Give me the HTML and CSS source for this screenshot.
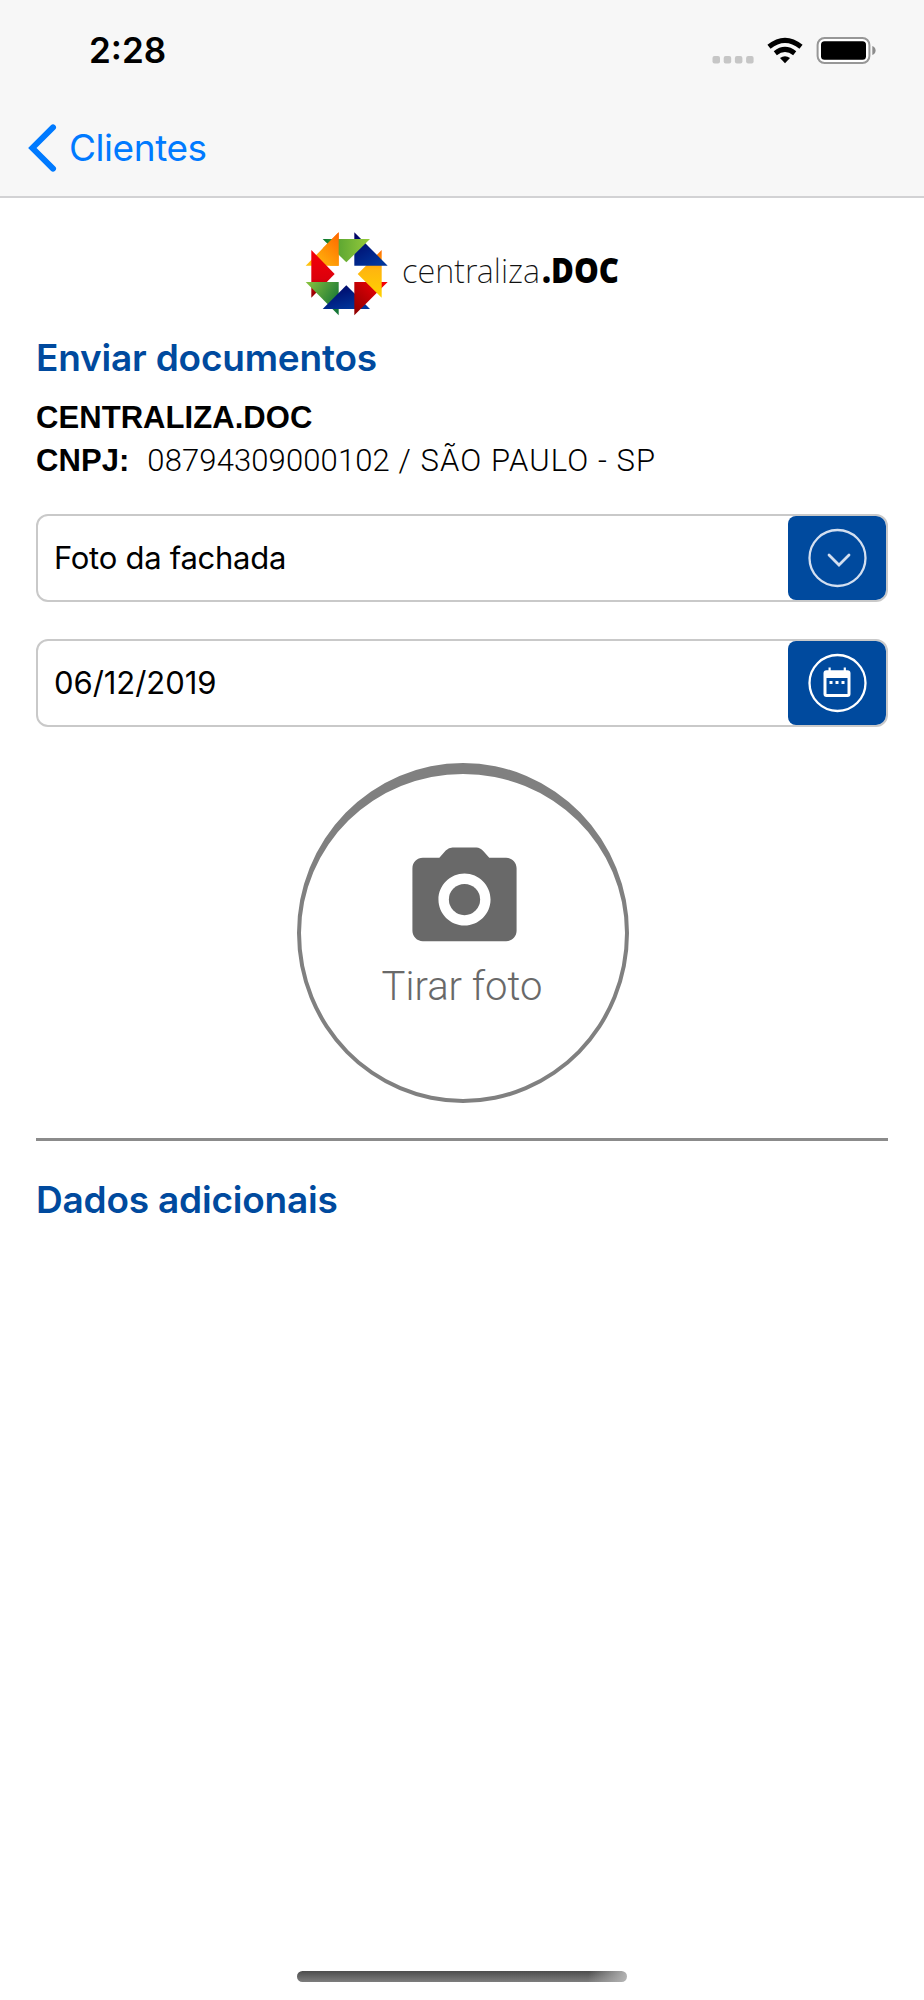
FILE: index.html
```html
<!DOCTYPE html>
<html lang="pt-BR">
<head>
<meta charset="utf-8">
<title>Enviar documentos</title>
<link rel="stylesheet" href="styles.css">
</head>
<body>
<div class="screen">
  <header class="header">
    <div class="status">
      <span class="time">2:28</span>
      <svg class="status-icons" width="166" height="30" viewBox="0 0 166 30">
        <g fill="#c6c6c6"><rect x="0.5" y="16" width="7.5" height="7.5" rx="2"/><rect x="11.7" y="16" width="7.5" height="7.5" rx="2"/><rect x="22.9" y="16" width="7.5" height="7.5" rx="2"/><rect x="34.1" y="16" width="7.5" height="7.5" rx="2"/></g>
        <g fill="none" stroke="#000" stroke-width="5"><path d="M57 6.8Q73 -6.2 89 6.8"/><path d="M63.3 13.2Q73 5.6 82.7 13.2"/></g>
        <path d="M68 18.1Q73 14.2 78 18.1L73 23.3Z"/>
        <rect x="105.6" y="-2.1" width="51.8" height="25.2" rx="7" fill="#fff" stroke="#979797" stroke-width="2"/>
        <rect x="109" y="1.2" width="45" height="18.6" rx="3.5"/>
        <path d="M160.3 6Q163.6 7.2 163.6 10.5Q163.6 13.8 160.3 15Z" fill="#8c8c8c"/>
      </svg>
    </div>
    <a class="back">
      <svg width="28" height="48" viewBox="0 0 28 48"><path d="M25 3.400L4.400 24L25 44.600" fill="none" stroke="#007aff" stroke-width="6" stroke-linecap="round"/></svg>
      <span class="back-label">Clientes</span>
    </a>
  </header>

  <main class="content">
    <svg class="logo" width="316" height="86" viewBox="0 0 316 86">
      <defs>
        <linearGradient id="green" x1="0" y1="0" x2="1" y2="0"><stop offset="0" stop-color="#00732f"/><stop offset=".35" stop-color="#5fa832"/><stop offset="1" stop-color="#97cb3c"/></linearGradient>
        <linearGradient id="green2" x1="0" y1="0" x2="1" y2=".6"><stop offset="0" stop-color="#8bc53f"/><stop offset="1" stop-color="#157536"/></linearGradient>
        <linearGradient id="orange" gradientUnits="userSpaceOnUse" x1="60" y1="137" x2="146" y2="50"><stop offset="0" stop-color="#ffc20e"/><stop offset="1" stop-color="#ff6c00"/></linearGradient>
        <linearGradient id="amber" x1="0" y1="1" x2="0" y2="0"><stop offset="0" stop-color="#ffd200"/><stop offset=".6" stop-color="#ffb50f"/><stop offset="1" stop-color="#ff6c00"/></linearGradient>
        <linearGradient id="navy" x1="0" y1="0" x2=".6" y2="1"><stop offset="0" stop-color="#000060"/><stop offset="1" stop-color="#00359b"/></linearGradient>
        <linearGradient id="red" x1="0" y1="1" x2="0" y2="0"><stop offset="0" stop-color="#8e0000"/><stop offset=".4" stop-color="#dc000c"/><stop offset="1" stop-color="#f60008"/></linearGradient>
        <linearGradient id="red2" x1="0" y1="1" x2="1" y2="0"><stop offset=".1" stop-color="#940000"/><stop offset=".9" stop-color="#f40008"/></linearGradient>
      </defs>
      <g transform="scale(.33333) translate(-45 -33)">
        <path fill="url(#orange)" d="M146 37V137H47Z"/>
        <path fill="url(#red)" d="M64 90V233L134 162Z"/>
        <path fill="url(#green2)" d="M47 186H146V286Z"/>
        <path fill="url(#navy)" d="M98 267H240L169 196Z"/>
        <path fill="url(#red2)" d="M193 186H293L193 286Z"/>
        <path fill="url(#amber)" d="M275 90V233L203 162Z"/>
        <path fill="url(#navy)" d="M193 37V137H293Z"/>
        <path fill="url(#green)" d="M98 57H240L169 127Z"/>
        <path fill="url(#orange)" d="M146 37V137H120L98 85Z"/>
      </g>
      <text class="logo-thin" x="97" y="52" textLength="138" lengthAdjust="spacingAndGlyphs">centraliza</text>
      <text class="logo-bold" x="237" y="52" textLength="77" lengthAdjust="spacingAndGlyphs">.DOC</text>
    </svg>

    <h1 class="title">Enviar documentos</h1>
    <div class="company">CENTRALIZA.DOC</div>
    <div class="cnpj"><b class="cnpj-key">CNPJ:</b><span class="cnpj-value">08794309000102<span class="city"> / SÃO PAULO - SP</span></span></div>

    <div class="field">
      <span class="field-text">Foto da fachada</span>
      <span class="field-button">
        <svg width="60" height="60" viewBox="0 0 60 60" fill="none" stroke="#d3dff0"><circle cx="30.500" cy="30" r="28" stroke-width="2.300"/><path d="M22 27L32 37L42 27" stroke-width="2.8" stroke-linecap="round"/></svg>
      </span>
    </div>
    <div class="field">
      <span class="field-text date">06/12/2019</span>
      <span class="field-button">
        <svg width="60" height="60" viewBox="0 0 60 60"><circle cx="30.500" cy="30" r="28" fill="none" stroke="#fff" stroke-width="2.300"/><path fill="#fff" fill-rule="evenodd" d="M21.5 14.5h2.2V17.300h13V14.500h2.200V17.300H40.500Q43.500 17.300 43.500 20.300V41Q43.500 44 40.500 44H19.500Q16.500 44 16.500 41V20.300Q16.500 17.300 19.500 17.300H21.500ZM19.500 25V41H40.500V25ZM22.500 28h3v3h-3ZM28.500 28h3v3h-3ZM34.500 28h3v3h-3Z"/></svg>
      </span>
    </div>

    <div class="photo">
      <svg width="125" height="125" viewBox="0 0 24 24" fill="#696969"><circle cx="12" cy="12" r="3"/><path d="M9 2L7.170 4H4c-1.100 0-2 .9-2 2v12c0 1.100.9 2 2 2h16c1.100 0 2-.9 2-2V6c0-1.100-.9-2-2-2h-3.250l-1.150-1.300Q15 2 14.300 2H9.700Q9 2 8.400 2.600L7.170 4zm3 15c-2.760 0-5-2.240-5-5s2.240-5 5-5 5 2.240 5 5-2.240 5-5 5z"/></svg>
      <span class="photo-label">Tirar foto</span>
    </div>

    <hr class="rule">
    <h2 class="title extra">Dados adicionais</h2>
  </main>
  <div class="home"></div>
</div>
</body>
</html>
```

FILE: styles.css
```css
* { box-sizing: border-box; }
body { margin: 0; background: #fff; color: #000; font-family: Inter, "Liberation Sans", sans-serif; }
svg { display: block; flex: none; overflow: visible; }
.screen { display: flex; flex-direction: column; width: 924px; height: 2000px; background: #fff; }
.header { height: 198px; background: #f7f7f7; border-bottom: 2px solid #d2d2d4; }
.status { display: flex; justify-content: space-between; height: 100px; padding: 30px 46px 0 89px; }
.time { font-size: 35px; line-height: 41px; font-weight: 600; letter-spacing: 0; }
.status-icons { margin-top: 10px; }
.back { display: flex; align-items: center; gap: 13px; height: 96px; padding-left: 28px; color: #007aff; }
.back-label { font-size: 37px; line-height: 48px; letter-spacing: -0.45px; }
.content { display: flex; flex-direction: column; padding: 33px 36px 0; }
.logo { align-self: flex-start; margin-left: 269px; }
.logo-thin { font-family: "Noto Sans", "Open Sans", sans-serif; font-weight: 200; font-size: 34px; fill: #111; }
.logo-bold { font-family: "Open Sans", sans-serif; font-weight: 800; font-size: 36px; }
.title { margin: 17px 0 0; color: #004a9e; font-size: 37px; line-height: 48px; font-weight: 600; letter-spacing: -0.2px; white-space: nowrap; }
.company, .cnpj-key { font-family: "Liberation Sans", sans-serif; font-weight: 700; font-size: 31px; line-height: 43px; letter-spacing: 0.06px; white-space: nowrap; }
.company { margin-top: 14px; }
.cnpj { display: flex; gap: 18px; height: 41px; }
.cnpj-value { font-family: Roboto, sans-serif; font-weight: 300; font-size: 31px; line-height: 44px; letter-spacing: 0.13px; white-space: pre; }
.city { letter-spacing: 1.08px; }
.field { display: flex; justify-content: space-between; height: 88px; margin-top: 37px; border: 2px solid #c9c9c9; border-radius: 12px; background: #fff; overflow: hidden; }
.cnpj + .field { margin-top: 34px; }
.field-text { padding-left: 16px; font-size: 31px; line-height: 84px; letter-spacing: -0.27px; white-space: nowrap; }
.date { letter-spacing: -0.05px; }
.field-button { display: flex; align-items: center; justify-content: center; width: 98px; border-radius: 8px; background: #004a9e; }
.photo { display: flex; flex-direction: column; align-items: center; align-self: flex-start; width: 332px; height: 340px; margin: 36px 0 0 261px; padding: 63px 0 0 3px; border: 4px solid #808080; border-top-width: 11px; border-radius: 50%; }
.photo-label { margin: 1px 5px 0 0; color: #696969; font-family: Roboto, sans-serif; font-size: 40px; line-height: 48px; font-weight: 300; }
.rule { width: 852px; height: 3px; margin: 35px 0 0; border: 0; background: #8b8b8b; }
.extra { margin-top: 35px; }
.home { width: 330px; height: 11px; margin: auto 0 18px 297px; border-radius: 6px; background: linear-gradient(100deg, transparent 88%, #b5b5b5 100%), linear-gradient(#4c4c4c, #7e7e7e); }
```
